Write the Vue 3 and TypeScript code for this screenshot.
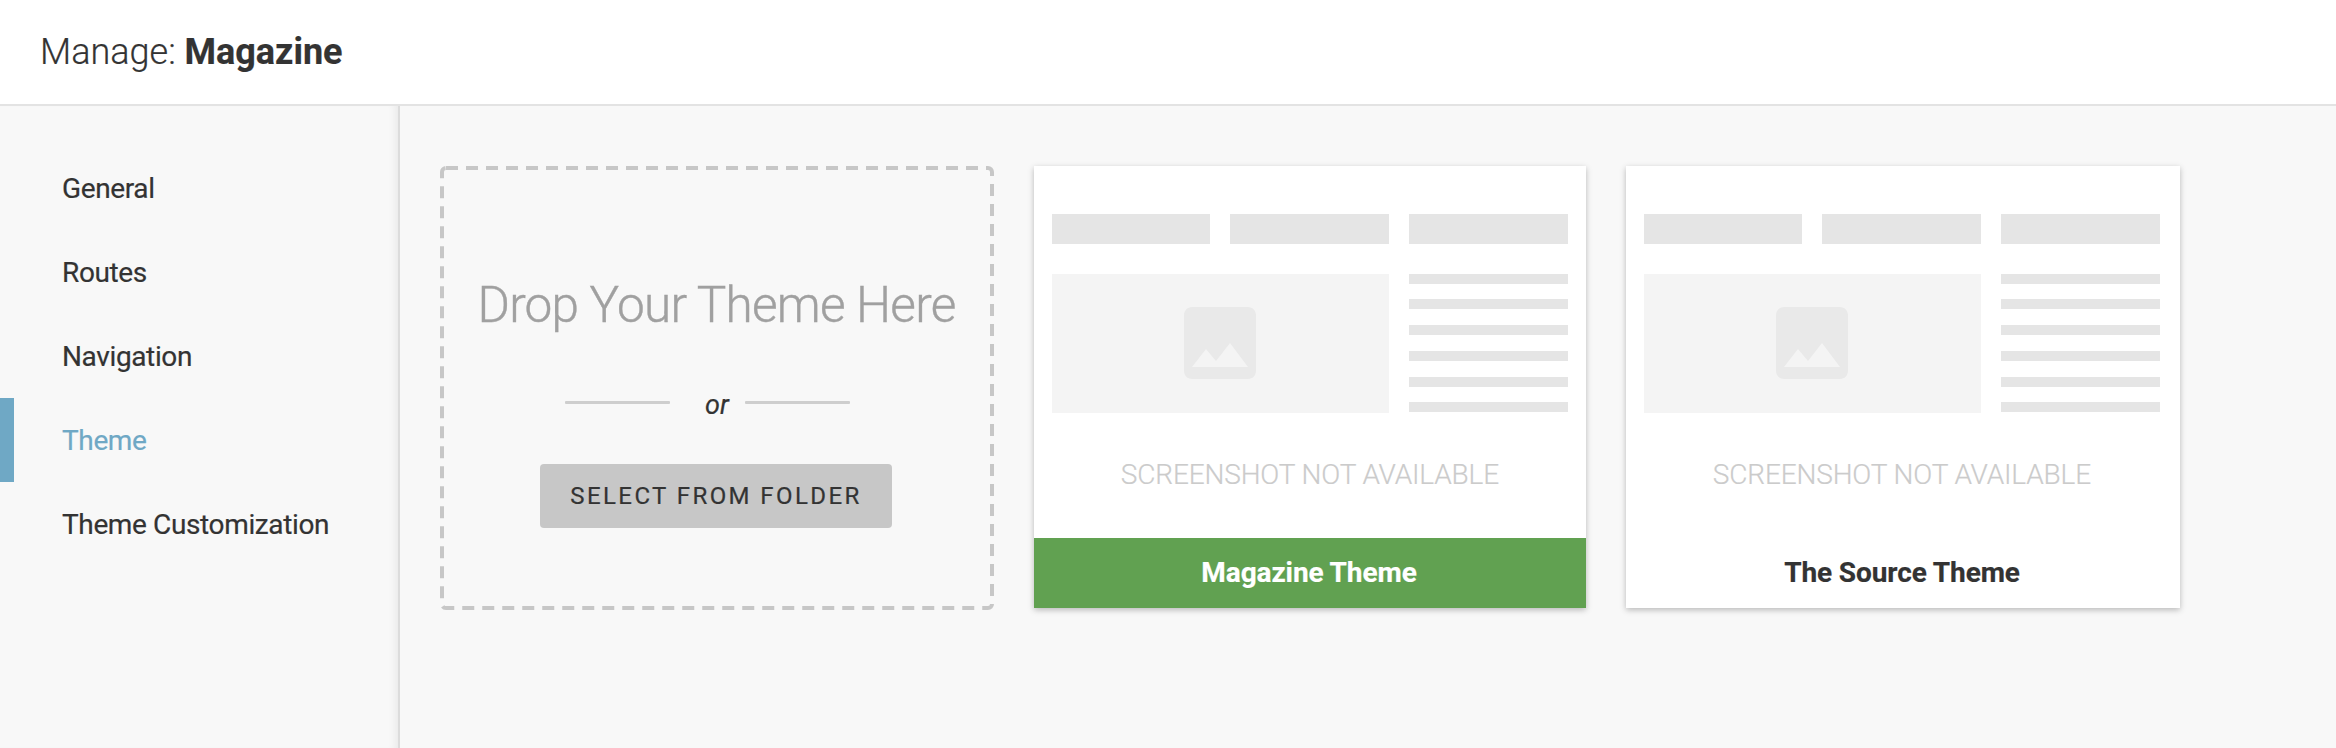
<script setup lang="ts">
interface NavItem {
  label: string
  active?: boolean
}

interface Theme {
  name: string
  active: boolean
}

const navItems: NavItem[] = [
  { label: 'General' },
  { label: 'Routes' },
  { label: 'Navigation' },
  { label: 'Theme', active: true },
  { label: 'Theme Customization' },
]

const themes: Theme[] = [
  { name: 'Magazine Theme', active: true },
  { name: 'The Source Theme', active: false },
]
</script>

<template>
  <div class="page">
    <header class="header">
      <h1 class="title">Manage: <strong>Magazine</strong></h1>
    </header>
    <div class="body">
      <nav class="sidebar">
        <a v-for="item in navItems" :key="item.label" class="nav-item" :class="{ active: item.active }">{{ item.label }}</a>
      </nav>
      <main class="content">
        <section class="dropzone">
          <svg class="outline" width="554" height="444" aria-hidden="true">
            <rect x="2" y="2" width="550" height="440" rx="4" />
          </svg>
          <p class="drop-title">Drop Your Theme Here</p>
          <div class="divider">
            <span class="rule"></span>
            <em class="or">or</em>
            <span class="rule"></span>
          </div>
          <button class="select-button" type="button">Select from folder</button>
        </section>
        <article v-for="theme in themes" :key="theme.name" class="card" :class="{ active: theme.active }">
          <div class="preview">
            <div class="tabs">
              <span v-for="n in 3" :key="n" class="block"></span>
            </div>
            <div class="columns">
              <div class="photo">
                <svg viewBox="3 3 18 18" width="72" height="72" aria-hidden="true">
                  <path d="M21 19V5c0-1.1-.9-2-2-2H5c-1.1 0-2 .9-2 2v14c0 1.1.9 2 2 2h14c1.1 0 2-.9 2-2zM8.5 13.5l2.5 3.01L14.5 12l4.5 6H5l3.5-4.5z" />
                </svg>
              </div>
              <div class="lines">
                <span v-for="n in 6" :key="n" class="line"></span>
              </div>
            </div>
            <p class="unavailable">SCREENSHOT NOT AVAILABLE</p>
          </div>
          <footer class="card-name">{{ theme.name }}</footer>
        </article>
      </main>
    </div>
  </div>
</template>

<style>
body {
  margin: 0;
  background: #f8f8f8;
}
</style>

<style scoped>
.page {
  display: flex;
  flex-direction: column;
  height: 748px;
  overflow: hidden;
  background: #f8f8f8;
  color: #333;
  font-family: Roboto, "Liberation Sans", sans-serif;
  -webkit-text-stroke: 0.2px currentColor;
}
.header {
  flex: none;
  box-sizing: border-box;
  height: 106px;
  padding: 0 40px;
  display: flex;
  align-items: center;
  background: #fff;
  border-bottom: 2px solid #e3e3e3;
}
.title {
  margin: 0;
  font-size: 36px;
  line-height: 42px;
  font-weight: 300;
}
.title strong {
  font-weight: 700;
}
.body {
  flex: 1;
  display: flex;
}
.sidebar {
  flex: none;
  box-sizing: border-box;
  width: 400px;
  padding-top: 40px;
  border-right: 2px solid #dcdcdc;
  box-shadow: inset -8px 0 8px -6px rgba(0, 0, 0, 0.07);
}
.nav-item {
  display: block;
  box-sizing: border-box;
  height: 84px;
  padding-left: 48px;
  border-left: 14px solid transparent;
  font-size: 28px;
  line-height: 86px;
  letter-spacing: -0.37px;
}
.nav-item.active {
  border-left-color: #6fa8c5;
  color: #6fa8c5;
}
.content {
  flex: 1;
  display: flex;
  align-items: flex-start;
  gap: 40px;
  padding: 60px 0 0 40px;
}
.dropzone {
  position: relative;
  box-sizing: border-box;
  width: 554px;
  height: 444px;
  padding-top: 109px;
  display: flex;
  flex-direction: column;
  align-items: center;
}
.outline {
  position: absolute;
  inset: 0;
  fill: none;
  stroke: #c7c7c7;
  stroke-width: 4;
  stroke-dasharray: 12 8;
}
.drop-title {
  margin: 0 1px 0 0;
  font-size: 49.5px;
  line-height: 61px;
  font-weight: 300;
  letter-spacing: -0.75px;
  color: #a0a0a0;
  white-space: nowrap;
  -webkit-text-stroke-width: 0.4px;
}
.divider {
  display: flex;
  width: 285px;
  height: 32px;
  margin: 51px 20px 0 0;
}
.rule {
  flex: none;
  width: 105px;
  height: 3px;
  margin-top: 14px;
  border-radius: 1px;
  background: #cecece;
}
.or {
  flex: 1;
  padding-left: 20px;
  font-size: 27px;
  line-height: 37px;
  text-align: center;
}
.select-button {
  width: 352px;
  height: 64px;
  margin: 45px 2px 0 0;
  padding: 0;
  border: 0;
  border-radius: 4px;
  background: #c7c7c7;
  color: #333;
  font: 400 24px/64px Roboto, "Liberation Sans", sans-serif;
  letter-spacing: 2.42px;
  text-transform: uppercase;
}
.card {
  flex: none;
  width: 554px;
  height: 442px;
  display: flex;
  flex-direction: column;
  background: #fff;
  box-shadow: 0 2px 6px rgba(0, 0, 0, 0.26);
}
.card.active {
  width: 552px;
}
.preview {
  box-sizing: border-box;
  height: 372px;
  padding: 47.5px 17.8px 0 17.6px;
}
.card:not(.active) .preview {
  padding-right: 19.8px;
}
.tabs {
  display: flex;
  gap: 20px;
}
.block {
  flex: 1;
  height: 30px;
  background: #e5e5e5;
}
.columns {
  display: flex;
  gap: 20px;
  height: 139px;
  margin-top: 30px;
}
.photo {
  flex: 1;
  display: flex;
  align-items: center;
  justify-content: center;
  background: #f4f4f4;
}
.photo svg {
  fill: #e9e9e9;
}
.lines {
  width: 158.9px;
  display: flex;
  flex-direction: column;
  justify-content: space-between;
}
.line {
  height: 10px;
  background: #e5e5e5;
}
.unavailable {
  margin: 45px 0 0;
  font-size: 28px;
  line-height: 34px;
  font-weight: 300;
  letter-spacing: -0.15px;
  text-align: center;
  color: #cbcbcb;
}
.card-name {
  box-sizing: border-box;
  height: 70px;
  padding-right: 2px;
  font-size: 28px;
  line-height: 69px;
  font-weight: 700;
  letter-spacing: -0.1px;
  text-align: center;
}
.card.active .card-name {
  background: #61a151;
  color: #fff;
}
</style>
